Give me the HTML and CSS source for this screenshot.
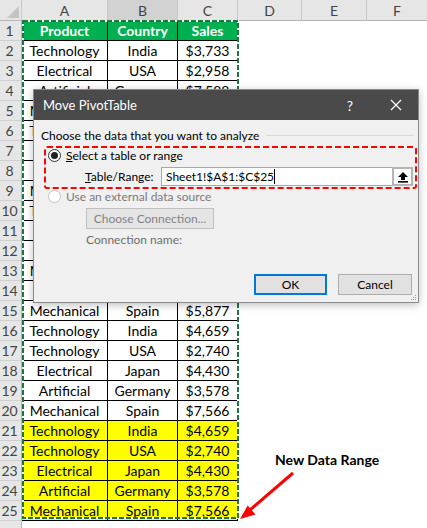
FILE: index.html
```html
<!DOCTYPE html>
<html>
<head>
<meta charset="utf-8">
<link rel="stylesheet" href="styles.css">
</head>
<body>
<div class="page">
  <div class="sheet">
    <div class="hrow">
      <div class="corner"><svg class="tri" width="12" height="12" viewBox="0 0 12 12"><polygon points="12,0 12,12 0,12" fill="#c4c4c4"/></svg></div>
      <div class="ch">A</div><div class="ch sel">B</div><div class="ch">C</div><div class="ch">D</div><div class="ch">E</div><div class="ch last">F</div>
    </div>
    <div class="row"><div class="rh">1</div><div class="c head">Product</div><div class="c head">Country</div><div class="c head">Sales</div></div>
    <div class="row"><div class="rh">2</div><div class="c">Technology</div><div class="c">India</div><div class="c">$3,733</div></div>
    <div class="row"><div class="rh">3</div><div class="c">Electrical</div><div class="c">USA</div><div class="c">$2,958</div></div>
    <div class="row"><div class="rh">4</div><div class="c">Artificial</div><div class="c">Germany</div><div class="c">$7,588</div></div>
    <div class="row"><div class="rh">5</div><div class="c">Mechanical</div><div class="c">Spain</div><div class="c">$5,245</div></div>
    <div class="row"><div class="rh">6</div><div class="c">Technology</div><div class="c">India</div><div class="c">$4,812</div></div>
    <div class="row"><div class="rh">7</div><div class="c">Electrical</div><div class="c">USA</div><div class="c">$3,116</div></div>
    <div class="row"><div class="rh">8</div><div class="c">Artificial</div><div class="c">Germany</div><div class="c">$6,204</div></div>
    <div class="row"><div class="rh">9</div><div class="c">Mechanical</div><div class="c">Spain</div><div class="c">$2,871</div></div>
    <div class="row"><div class="rh">10</div><div class="c">Technology</div><div class="c">India</div><div class="c">$5,430</div></div>
    <div class="row"><div class="rh">11</div><div class="c">Electrical</div><div class="c">Japan</div><div class="c">$3,962</div></div>
    <div class="row"><div class="rh">12</div><div class="c">Artificial</div><div class="c">Germany</div><div class="c">$4,087</div></div>
    <div class="row"><div class="rh">13</div><div class="c">Mechanical</div><div class="c">Spain</div><div class="c">$6,519</div></div>
    <div class="row"><div class="rh">14</div><div class="c">Artificial</div><div class="c">Germany</div><div class="c">$3,274</div></div>
    <div class="row"><div class="rh">15</div><div class="c">Mechanical</div><div class="c">Spain</div><div class="c">$5,877</div></div>
    <div class="row"><div class="rh">16</div><div class="c">Technology</div><div class="c">India</div><div class="c">$4,659</div></div>
    <div class="row"><div class="rh">17</div><div class="c">Technology</div><div class="c">USA</div><div class="c">$2,740</div></div>
    <div class="row"><div class="rh">18</div><div class="c">Electrical</div><div class="c">Japan</div><div class="c">$4,430</div></div>
    <div class="row"><div class="rh">19</div><div class="c">Artificial</div><div class="c">Germany</div><div class="c">$3,578</div></div>
    <div class="row"><div class="rh">20</div><div class="c">Mechanical</div><div class="c">Spain</div><div class="c">$7,566</div></div>
    <div class="row yel"><div class="rh">21</div><div class="c">Technology</div><div class="c">India</div><div class="c">$4,659</div></div>
    <div class="row yel"><div class="rh">22</div><div class="c">Technology</div><div class="c">USA</div><div class="c">$2,740</div></div>
    <div class="row yel"><div class="rh">23</div><div class="c">Electrical</div><div class="c">Japan</div><div class="c">$4,430</div></div>
    <div class="row yel"><div class="rh">24</div><div class="c">Artificial</div><div class="c">Germany</div><div class="c">$3,578</div></div>
    <div class="row yel"><div class="rh">25</div><div class="c">Mechanical</div><div class="c">Spain</div><div class="c">$7,566</div></div>
    <div class="row"><div class="rh"></div></div>
  </div>

  <svg class="ants" width="219" height="501" viewBox="0 0 219 501">
    <rect x="2" y="1" width="215" height="497" fill="none" stroke="#ffffff" stroke-width="2"/>
    <rect x="2" y="1" width="215" height="497" fill="none" stroke="#217346" stroke-width="2" stroke-dasharray="5 2"/>
  </svg>

  <div class="dialog">
    <div class="titlebar">
      <span class="title">Move PivotTable</span>
      <span class="help">?</span>
      <svg class="close" width="12" height="12" viewBox="0 0 12 12"><path d="M1 1 L11 11 M11 1 L1 11" stroke="#ffffff" stroke-width="1.2"/></svg>
    </div>
    <div class="body">
      <div class="section"><span>Choose the data that you want to analyze</span><span class="rule"></span></div>
      <div class="redbox">
        <svg class="dash" width="373" height="43" viewBox="0 0 373 43"><rect x="1" y="1" width="371" height="41" rx="2" fill="none" stroke="#ff0000" stroke-width="2" stroke-dasharray="6 3"/></svg>
        <div class="opt"><span class="radio on"><span class="dot"></span></span><span><u>S</u>elect a table or range</span></div>
        <div class="rangerow">
          <span class="lbl"><u>T</u>able/Range:</span>
          <div class="input"><span class="val">Sheet1!$A$1:$C$25</span><span class="caret"></span><span class="grow"></span>
            <span class="refbtn"><svg width="12" height="12" viewBox="0 0 12 12"><polygon points="6,1 11,6 8,6 8,9 4,9 4,6 1,6" fill="#000"/><rect x="1" y="10" width="10" height="1.6" fill="#000"/></svg></span>
          </div>
        </div>
      </div>
      <div class="opt dis"><span class="radio"></span><span>Use an external data source</span></div>
      <div class="sub">
        <div class="btn disbtn">Choose Connection...</div>
        <div class="connname">Connection name:</div>
      </div>
      <div class="actions">
        <div class="btn ok">OK</div>
        <div class="btn cancel">Cancel</div>
      </div>
      <svg class="grip" width="6" height="6" viewBox="0 0 6 6"><rect x="4" y="0" width="1" height="1" fill="#a0a0a0"/><rect x="2" y="2" width="1" height="1" fill="#a0a0a0"/><rect x="4" y="2" width="1" height="1" fill="#a0a0a0"/><rect x="0" y="4" width="1" height="1" fill="#a0a0a0"/><rect x="2" y="4" width="1" height="1" fill="#a0a0a0"/><rect x="4" y="4" width="1" height="1" fill="#a0a0a0"/></svg>
    </div>
  </div>

  <div class="note">New Data Range</div>
  <svg class="arrow" width="70" height="60" viewBox="0 0 70 60">
    <line x1="62" y1="5" x2="19" y2="42" stroke="#ff0000" stroke-width="3"/>
    <polygon points="9,51 24.5,46.5 16.7,37.5" fill="#ff0000"/>
  </svg>
</div>
</body>
</html>
```
FILE: styles.css
```css
html, body {
  margin: 0;
  padding: 0;
  background: #ffffff;
}
.page {
  position: relative;
  width: 427px;
  height: 528px;
  overflow: hidden;
  font-family: Lato, "Liberation Sans", sans-serif;
}
.sheet {
  display: flex;
  flex-direction: column;
}
.hrow, .row {
  display: grid;
  grid-template-columns: 22px 86px 70px 60px 64px 65px 60px;
}
.hrow {
  height: 21px;
}
.row {
  height: 20px;
}
.corner {
  background: #e6e6e6;
  border-right: 1px solid #c8c8c8;
  border-bottom: 1px solid #b5b5b5;
  display: flex;
  align-items: flex-end;
  justify-content: flex-end;
  padding: 0 2px 2px 0;
}
.ch {
  background: #e6e6e6;
  border-right: 1px solid #c8c8c8;
  border-bottom: 1px solid #b5b5b5;
  color: #444444;
  font-size: 14px;
  display: flex;
  align-items: center;
  justify-content: center;
}
.ch.sel {
  background: #d2d2d2;
}
.ch.last {
  border-right: none;
}
.rh {
  background: #e6e6e6;
  border-right: 1px solid #b5b5b5;
  border-bottom: 1px solid #d0d0d0;
  color: #444444;
  font-size: 14px;
  display: flex;
  align-items: center;
  justify-content: center;
  padding-right: 2px;
}
.c {
  border-right: 1px solid #000000;
  border-bottom: 1px solid #000000;
  color: #000000;
  font-size: 14px;
  display: flex;
  align-items: center;
  justify-content: center;
  white-space: nowrap;
}
.c.head {
  background: #00b050;
  color: #ffffff;
  font-weight: bold;
}
.yel .c {
  background: #ffff00;
}
.ants {
  position: absolute;
  left: 21px;
  top: 20px;
}

/* dialog */
.dialog {
  position: absolute;
  left: 33px;
  top: 89px;
  width: 386px;
  height: 214px;
  box-sizing: border-box;
  background: #f0f0f0;
  border: 1px solid #8a8a8a;
  box-shadow: 0 2px 8px rgba(0,0,0,0.25);
  font-family: Lato, "Noto Sans", sans-serif;
  font-size: 12px;
  color: #000000;
  display: flex;
  flex-direction: column;
}
.titlebar {
  height: 30px;
  background: #4a4a4a;
  color: #ffffff;
  display: flex;
  align-items: center;
  padding-left: 9px;
  font-size: 13px;
}
.title {
  flex: 1;
}
.help {
  font-size: 14px;
  margin-right: 37px;
}
.close {
  margin-right: 16px;
}
.body {
  position: relative;
  flex: 1;
  padding: 6px 5px 0 7px;
  display: flex;
  flex-direction: column;
}
.section {
  display: flex;
  align-items: center;
  height: 18px;
}
.rule {
  flex: 1;
  height: 1px;
  background: #d8d8d8;
  margin-left: 7px;
}
.redbox {
  position: relative;
  margin: 2px 0 0 3px;
  width: 373px;
  height: 43px;
  box-sizing: border-box;
  padding: 2px 4px 0 4px;
}
.dash {
  position: absolute;
  left: 0;
  top: 0;
}
.opt {
  display: flex;
  align-items: center;
  height: 15px;
  gap: 5px;
}
.radio {
  width: 13px;
  height: 13px;
  box-sizing: border-box;
  border: 1px solid #333333;
  border-radius: 50%;
  background: #ffffff;
  display: flex;
  align-items: center;
  justify-content: center;
  flex: none;
}
.dot {
  width: 7px;
  height: 7px;
  border-radius: 50%;
  background: #202020;
}
.rangerow {
  display: flex;
  align-items: center;
  margin-top: 4px;
  padding-left: 37px;
}
.lbl {
  width: 76px;
  flex: none;
  white-space: nowrap;
}
.input {
  width: 252px;
  height: 19px;
  box-sizing: border-box;
  border: 1px solid #a8a8a8;
  background: #ffffff;
  display: flex;
  align-items: center;
  padding-left: 4px;
}
.caret {
  width: 1px;
  height: 15px;
  background: #000000;
}
.grow {
  flex: 1;
}
.refbtn {
  width: 21px;
  height: 19px;
  box-sizing: border-box;
  border: 2px solid #b4b4b4;
  margin-right: -1px;
  display: flex;
  align-items: center;
  justify-content: center;
  background: #ffffff;
}
.opt.dis {
  margin: 0 0 0 7px;
  color: #7a7a7a;
}
.opt.dis .radio {
  border-color: #c4c4c4;
}
.sub {
  padding-left: 45px;
  display: flex;
  flex-direction: column;
  align-items: flex-start;
}
.btn {
  box-sizing: border-box;
  background: #e1e1e1;
  border: 1px solid #adadad;
  display: flex;
  align-items: center;
  justify-content: center;
}
.disbtn {
  margin-top: 4px;
  width: 128px;
  height: 21px;
  color: #838383;
  border-color: #bfbfbf;
  background: #e5e5e5;
}
.connname {
  margin-top: 3px;
  color: #6d6d6d;
}
.actions {
  margin-top: auto;
  margin-bottom: 7px;
  display: flex;
  justify-content: flex-end;
  gap: 11px;
  padding-right: 1px;
}
.ok {
  width: 73px;
  height: 21px;
  border: 2px solid #0078d7;
}
.cancel {
  width: 74px;
  height: 21px;
}
.grip {
  position: absolute;
  right: 1px;
  bottom: 1px;
}
.note {
  position: absolute;
  left: 275px;
  top: 451px;
  font-family: Lato, "Liberation Sans", sans-serif;
  font-weight: bold;
  font-size: 14px;
  color: #000000;
}
.arrow {
  position: absolute;
  left: 231px;
  top: 468px;
}
```
